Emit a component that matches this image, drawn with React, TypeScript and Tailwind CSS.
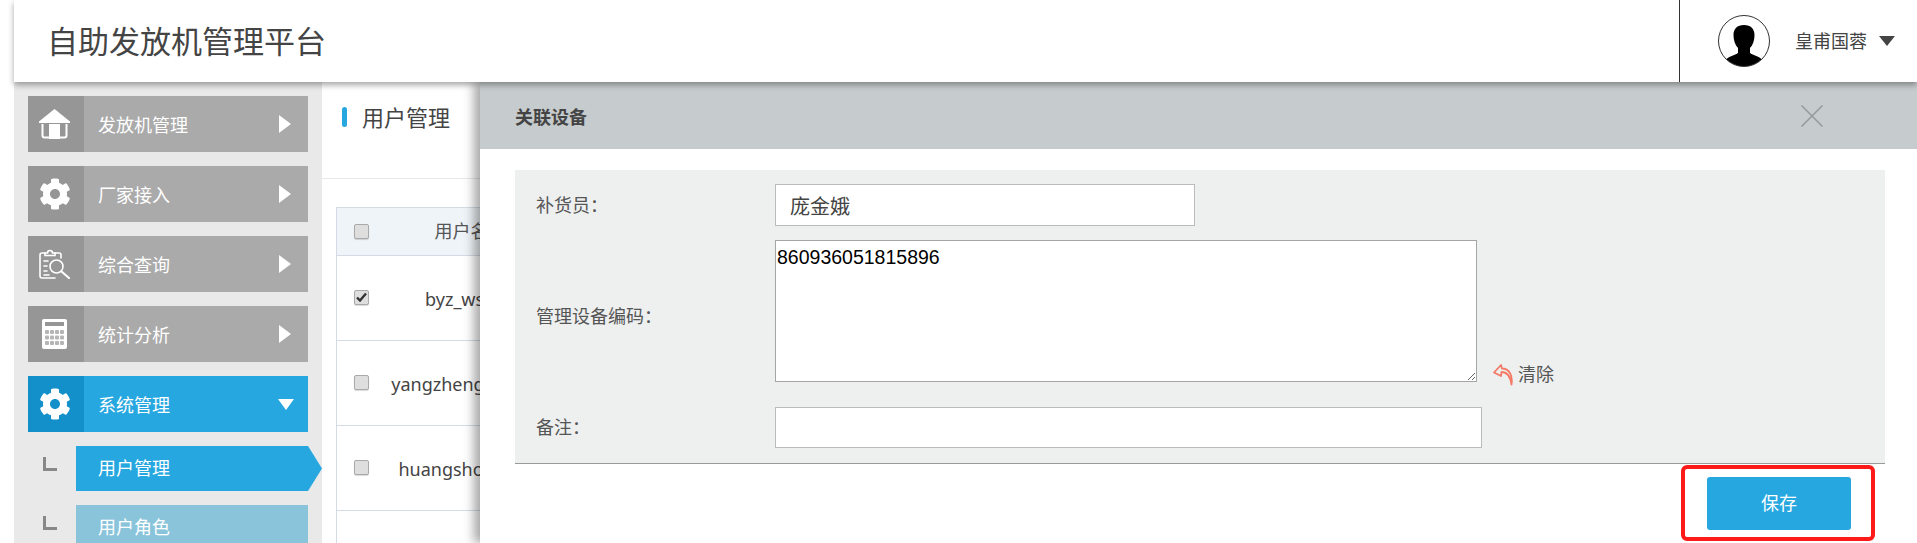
import { FaCog } from "react-icons/fa";

function HomeIcon() {
  return (
    <svg width="31" height="30" viewBox="0 0 31 30">
      <path d="M15.5 0L31 12.5V14H0V12.5Z" fill="#fff" />
      <path d="M3.5 15V26.5Q3.5 28.5 5.5 28.5H25.5Q27.5 28.5 27.5 26.5V15" fill="none" stroke="#fff" strokeWidth="2" />
      <rect x="10" y="15" width="11" height="15" fill="#fff" />
    </svg>
  );
}

function GearIcon() {
  return <FaCog size={32} color="#fff" />;
}

function SearchClipIcon() {
  return (
    <svg width="31" height="30" viewBox="0 0 31 30" fill="none" stroke="#fff" strokeWidth="1.6" strokeLinecap="round">
      <path d="M6 4H3a2 2 0 0 0-2 2v21a2 2 0 0 0 2 2h13" />
      <path d="M16 4h4a2 2 0 0 1 2 2v3" />
      <path d="M6 5.5V4h2.5a2.5 2.5 0 0 1 5 0H16v2.5H6z" />
      <path d="M5 12h4M5 17h3M5 22h3M5 26h5" />
      <circle cx="17.5" cy="17.5" r="6.5" />
      <path d="M22.5 22.5L30 29" strokeWidth="2.2" />
    </svg>
  );
}

function CalcIcon() {
  const keys = [0, 1, 2, 3].flatMap((c) => [0, 1, 2].map((r) => ({ c, r })));
  return (
    <svg width="25" height="30" viewBox="0 0 25 30">
      <rect width="25" height="30" rx="2" fill="#fff" />
      <rect x="3" y="3" width="19" height="4" fill="#969696" />
      {keys.map(({ c, r }) => (
        <rect key={`${c}-${r}`} x={3 + c * 5} y={11 + r * 5.5} width="4" height="4" rx="1" fill="#b5b5b5" />
      ))}
    </svg>
  );
}

function Avatar() {
  return (
    <svg width="52" height="52" viewBox="0 0 52 52">
      <defs>
        <clipPath id="avatar-clip">
          <circle cx="26" cy="26" r="25.5" />
        </clipPath>
      </defs>
      <circle cx="26" cy="26" r="25.5" fill="#fff" />
      <path
        clipPath="url(#avatar-clip)"
        d="M26 10C19 10 15.500 14 15.500 20C15.500 25 17 30 20 33V38C16 41 10 41 7 46L9 52H43L45 46C42 41 36 41 32 38V33C35 30 36.500 25 36.500 20C36.500 14 33 10 26 10Z"
        fill="#000"
      />
      <circle cx="26" cy="26" r="25.500" fill="none" stroke="#333" strokeWidth="1" />
    </svg>
  );
}

function CheckBox({ checked }: { checked?: boolean }) {
  return (
    <div className="w-[15px] h-[15px] mx-auto flex items-center justify-center rounded-[2px] border border-[#a9a9a9] bg-[#dedede] shadow-[0_1px_1px_rgba(0,0,0,0.15)]">
      {checked && (
        <svg width="11" height="10" viewBox="0 0 11 10">
          <path d="M1 5.500L4 8.500L10 1.500" fill="none" stroke="#333" strokeWidth="2.400" />
        </svg>
      )}
    </div>
  );
}

const menus = [
  { label: "发放机管理", icon: HomeIcon },
  { label: "厂家接入", icon: GearIcon },
  { label: "综合查询", icon: SearchClipIcon },
  { label: "统计分析", icon: CalcIcon },
];

const rows = [
  { name: "byz_wsyj", checked: true },
  { name: "yangzhenghaol1", checked: false },
  { name: "huangshouli01", checked: false },
];

export default function App() {
  return (
    <div className="relative h-screen overflow-hidden bg-white font-['Noto_Sans','Noto_Sans_CJK_SC',sans-serif] text-[18px] text-[#444]">
      <header className="relative z-20 ml-[14px] h-[82px] flex items-center justify-between bg-white shadow-[0_3px_6px_rgba(0,0,0,0.35)]">
        <h1 className="pl-[33px] text-[31px] font-normal text-[#444]">自助发放机管理平台</h1>
        <div className="w-[238px] h-full flex items-center border-l border-[#333]">
          <div className="ml-[38px]">
            <Avatar />
          </div>
          <span className="ml-[25px] text-[#444]">皇甫国蓉</span>
          <span className="ml-[12px] w-0 h-0 border-x-[8px] border-t-[10px] border-x-transparent border-t-[#444]" />
        </div>
      </header>

      <div className="ml-[14px] flex h-[461px]">
        <aside className="w-[308px] shrink-0 bg-[#e9e9e9] px-[14px] pt-[14px] flex flex-col gap-[14px] text-white">
          {menus.map((m) => (
            <div key={m.label} className="h-[56px] shrink-0 flex items-center bg-[#aaaaaa]">
              <div className="w-[56px] h-full pr-[3px] flex items-center justify-center bg-[#969696]">
                <m.icon />
              </div>
              <span className="ml-[14px] pt-[2px] flex-1">{m.label}</span>
              <span className="mr-[17px] w-0 h-0 border-y-[9px] border-l-[12px] border-y-transparent border-l-white" />
            </div>
          ))}
          <div className="h-[56px] shrink-0 flex items-center bg-[#27a7e0]">
            <div className="w-[56px] h-full pr-[3px] flex items-center justify-center bg-[#138fc9]">
              <GearIcon />
            </div>
            <span className="ml-[14px] pt-[2px] flex-1">系统管理</span>
            <span className="mr-[14px] w-0 h-0 border-x-[8.500px] border-t-[11px] border-x-transparent border-t-white" />
          </div>
          <div className="h-[45px] shrink-0 flex -mr-[14px]">
            <div className="w-[48px] shrink-0 pl-[15px] pt-[11px]">
              <div className="w-[14px] h-[14px] border-l-[3px] border-b-[3px] border-[#888]" />
            </div>
            <div className="flex-1 flex items-center pl-[22px] bg-[#27a7e0] [clip-path:polygon(0_0,232px_0,100%_50%,232px_100%,0_100%)]">
              用户管理
            </div>
          </div>
          <div className="h-[45px] shrink-0 flex">
            <div className="w-[48px] shrink-0 pl-[15px] pt-[11px]">
              <div className="w-[14px] h-[14px] border-l-[3px] border-b-[3px] border-[#888]" />
            </div>
            <div className="flex-1 flex items-center pl-[22px] bg-[#8ac4db]">用户角色</div>
          </div>
        </aside>

        <main className="flex-1 overflow-hidden pl-[14px]">
          <div className="-ml-[14px] h-[97px] pb-[26px] pl-[20px] flex items-center gap-[15px] border-b border-[#e8e8e8]">
            <span className="w-[5px] h-[20px] rounded-full bg-[#27a7e0]" />
            <span className="text-[22px] text-[#444]">用户管理</span>
          </div>
          <table className="mt-[28px] w-[700px] table-fixed border-collapse">
            <colgroup>
              <col className="w-[49px]" />
              <col className="w-[152px]" />
              <col />
            </colgroup>
            <thead>
              <tr className="h-[48px] bg-[#eff4f8] border border-[#d5dbe5]">
                <th className="font-normal">
                  <CheckBox />
                </th>
                <th className="font-normal text-center text-[#555]">用户名</th>
                <th />
              </tr>
            </thead>
            <tbody>
              {rows.map((r) => (
                <tr key={r.name} className="h-[85px] border border-[#d5dbe5]">
                  <td className="pb-[2px]">
                    <CheckBox checked={r.checked} />
                  </td>
                  <td className="pt-[3px] text-center whitespace-nowrap">{r.name}</td>
                  <td />
                </tr>
              ))}
              <tr className="h-[85px] border border-[#d5dbe5]">
                <td colSpan={3} />
              </tr>
            </tbody>
          </table>
        </main>
      </div>

      {/* 关联设备弹窗 */}
      <div className="absolute left-[480px] right-0 top-[82px] bottom-0 z-10 bg-white shadow-[-6px_0_10px_rgba(0,0,0,0.35)]">
        <div className="h-[67px] pl-[35px] pr-[94px] flex items-center justify-between bg-[#c6cbcd]">
          <span className="pt-[3px] font-bold text-[#444]">关联设备</span>
          <svg width="22" height="22" viewBox="0 0 22 22">
            <path d="M0.500 0.500L21.500 21.500M21.500 0.500L0.500 21.500" stroke="#93999c" strokeWidth="1.500" />
          </svg>
        </div>

        <div className="mt-[21px] ml-[35px] mr-[32px] pt-[14px] pb-[15px] bg-[#eef0f0] border-b border-[#999] text-[#555]">
          <div className="flex items-center h-[42px]">
            <label className="w-[260px] pl-[21px]">补货员：</label>
            <input
              readOnly
              value="庞金娥"
              className="w-[420px] h-[42px] px-[14px] bg-white border border-[#bbb] text-[20px] text-[#444] outline-none"
            />
          </div>
          <div className="flex items-center mt-[14px] h-[142px]">
            <label className="w-[260px] pl-[21px] pt-[10px]">管理设备编码：</label>
            <textarea
              readOnly
              value="860936051815896"
              className="w-[702px] h-[142px] px-[1px] pt-[4px] pb-0 bg-white border border-[#a5a5a5] font-['Liberation_Sans',sans-serif] text-[19.500px] leading-[24px] text-black outline-none"
            />
            <div className="self-end ml-[16px] -mb-[6px] flex items-center gap-[5px]">
              <svg width="20" height="22" viewBox="0 0 20 22" fill="none">
                <path
                  d="M8 1L1 8.500L8 12L8.500 8C13 8 17 10 18.500 20.500C20 11 16 4.500 9 4.500Z"
                  stroke="#f47a66"
                  strokeWidth="1.800"
                  strokeLinejoin="round"
                />
              </svg>
              <span>清除</span>
            </div>
          </div>
          <div className="flex items-center mt-[25px] h-[41px]">
            <label className="w-[260px] pl-[21px]">备注：</label>
            <input readOnly className="w-[707px] h-[41px] bg-white border border-[#bbb] outline-none" />
          </div>
        </div>

        <div className="pt-[13px] pr-[66px] flex justify-end">
          <div className="relative">
            <button className="w-[144px] h-[53px] rounded-[3px] bg-[#27a7e0] text-white text-[18px]">保存</button>
            <div className="absolute -left-[26px] -right-[24px] -top-[12px] -bottom-[11px] rounded-[6px] border-4 border-[#ff1a1a]" />
          </div>
        </div>
      </div>
    </div>
  );
}
